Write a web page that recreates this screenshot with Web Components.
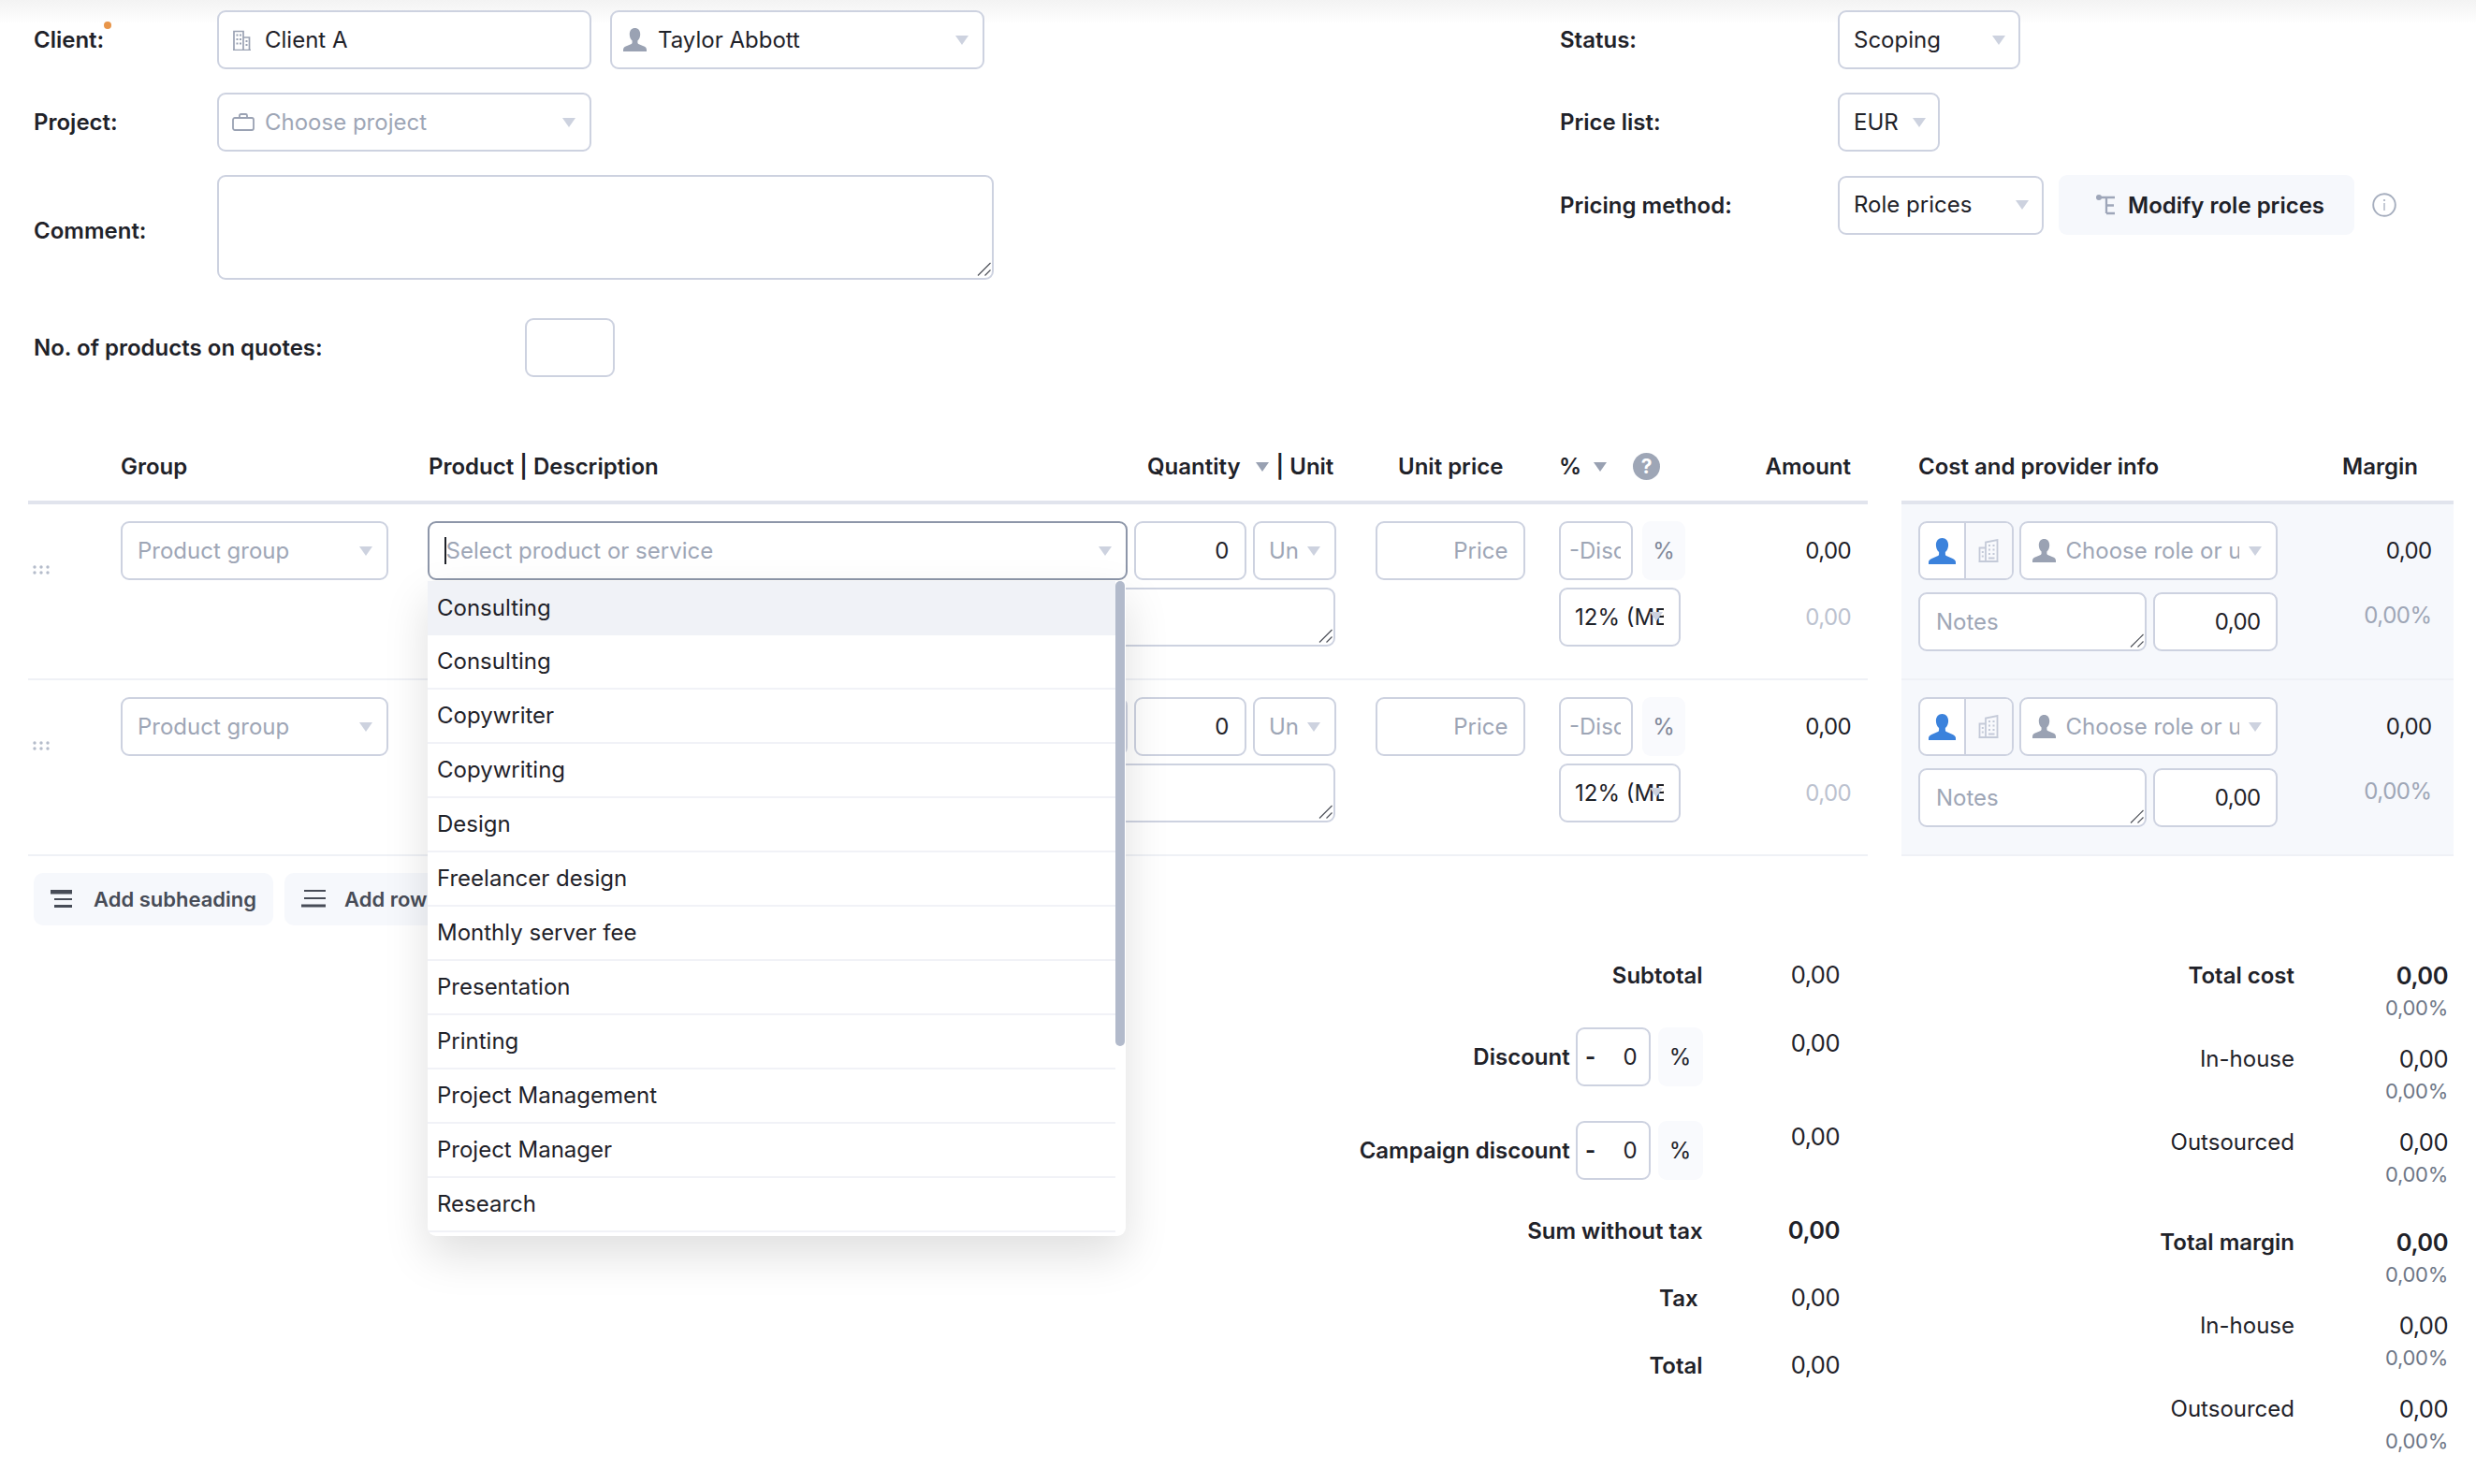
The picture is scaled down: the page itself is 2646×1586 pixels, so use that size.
<!DOCTYPE html>
<html lang="en">
<head>
<meta charset="utf-8">
<title>Quote</title>
<style>
html,body{margin:0;padding:0;background:#fff}
body{width:2646px;height:1586px;overflow:hidden;font-family:Inter,"Noto Sans",sans-serif;font-size:24px;color:#1f2229}
</style>
</head>
<body>
<x-app></x-app>
<script>
const ICONS = {
  person:[29,28,'<path fill="currentColor" d="M14.5 0c4 0 6.6 3 6.6 7.5 0 3.2-1.4 6-3.2 7.6v2.2c0 1 .6 1.6 1.6 2l6.3 2.6c1.8.8 3 2 3.2 3.7V28H0v-2.4c.2-1.7 1.4-2.9 3.2-3.7l6.3-2.6c1-.4 1.6-1 1.6-2v-2.2C9.3 13.5 7.9 10.7 7.9 7.5 7.9 3 10.5 0 14.5 0z"/>'],
  personS:[25,25,'<path fill="currentColor" d="M12.5 0c3.5 0 5.7 2.700 5.700 6.700 0 2.900-1.200 5.400-2.800 6.800v2c0 .9.500 1.400 1.400 1.800l5.400 2.300c1.600.7 2.600 1.800 2.800 3.300V25H0v-2.100c.2-1.500 1.200-2.600 2.800-3.300l5.400-2.300c.9-.4 1.400-.9 1.400-1.800v-2C8 12.100 6.800 9.600 6.800 6.700 6.800 2.700 9 0 12.500 0z"/>'],
  bldgR:[22,25,'<g fill="none" stroke="currentColor" stroke-width="1.800"><path d="M8 24V3.500L20.500 1v23M8 9.500H1.500V24M.5 24h21"/></g><g fill="currentColor"><rect x="11" y="6" width="2" height="2"/><rect x="15.500" y="6" width="2" height="2"/><rect x="11" y="10.500" width="2" height="2"/><rect x="15.500" y="10.500" width="2" height="2"/><rect x="11" y="15" width="2" height="2"/><rect x="15.500" y="15" width="2" height="2"/><rect x="11" y="19.500" width="6.500" height="2"/><rect x="3.800" y="13" width="2" height="2"/><rect x="3.800" y="17.500" width="2" height="2"/></g>'],
  bldgL:[19,22,'<g fill="none" stroke="currentColor" stroke-width="1.700"><path d="M1 21.500V1.500h10v20M11 8h6.500v13.500M0 21.500h19"/></g><g fill="currentColor"><rect x="3.500" y="4.500" width="2" height="2"/><rect x="7" y="4.500" width="2" height="2"/><rect x="3.500" y="9" width="2" height="2"/><rect x="7" y="9" width="2" height="2"/><rect x="3.500" y="13.500" width="2" height="2"/><rect x="7" y="13.500" width="2" height="2"/><rect x="13.500" y="11" width="2" height="2"/><rect x="13.500" y="15" width="2" height="2"/></g>'],
  bag:[24,19,'<g fill="none" stroke="currentColor" stroke-width="1.800"><rect x="1" y="5" width="22" height="13" rx="2"/><path d="M8 5V2.500A1.500 1.500 0 0 1 9.500 1h5A1.500 1.500 0 0 1 16 2.500V5"/></g>'],
  caret:[14,10,'<path fill="currentColor" d="M0 0h14L7 10z"/>'],
  tree:[21,24,'<circle cx="3" cy="4" r="3" fill="currentColor"/><path fill="none" stroke="currentColor" stroke-width="2.300" d="M3 4h17M11 4v17M11 12.500h8M11 21h9"/>'],
  info:[26,26,'<circle cx="13" cy="13" r="11.800" fill="none" stroke="currentColor" stroke-width="1.900"/><circle cx="13" cy="8" r="1.100" fill="currentColor"/><path stroke="currentColor" stroke-width="1.300" d="M13 11v8"/>'],
  drag:[18,10,'<g fill="currentColor"><circle cx="2" cy="2" r="1.700"/><circle cx="9" cy="2" r="1.700"/><circle cx="16" cy="2" r="1.700"/><circle cx="2" cy="8" r="1.700"/><circle cx="9" cy="8" r="1.700"/><circle cx="16" cy="8" r="1.700"/></g>'],
  sub:[23,20,'<g fill="currentColor"><rect x="0" y="0" width="23" height="4.500"/><rect x="4" y="9" width="19" height="2"/><rect x="4" y="16" width="19" height="3"/></g>'],
  row:[26,20,'<g fill="currentColor"><rect x="3" y="0" width="23" height="2"/><rect x="3" y="8" width="23" height="2"/><rect x="0" y="15.500" width="26" height="3"/></g>'],
  grip:[15,15,'<path fill="none" stroke="#4f525a" stroke-width="1.200" d="M1 14.500L14.500 1M8.500 14.500L14.500 8.500"/>']
};

function def(name, css, html, init){
  customElements.define(name, class extends HTMLElement{
    constructor(){
      super();
      const root = this.attachShadow({mode:'open'});
      root.innerHTML = '<style>'+css+'</style>'+(typeof html==='function'?html(this):html);
    }
    connectedCallback(){ if(init) init(this); }
  });
}

def('x-icon', ':host{display:inline-flex;flex:none;line-height:0}svg{display:block}', '', el=>{
  const ic = ICONS[el.getAttribute('name')];
  const w = el.getAttribute('w')||ic[0], h = el.getAttribute('h')||ic[1];
  el.shadowRoot.innerHTML = el.shadowRoot.querySelector('style').outerHTML +
    `<svg xmlns="http://www.w3.org/2000/svg" width="${w}" height="${h}" viewBox="0 0 ${ic[0]} ${ic[1]}">${ic[2]}</svg>`;
});

def('x-box', `
:host{display:flex;align-items:center;box-sizing:border-box;height:63px;border:2px solid #cdd2e0;border-radius:9px;background:#fff;padding:0 15px;position:relative;color:#1f2229;min-width:0}
:host([ph]){color:#9ea6b6}
:host([focus]){border-color:#8d96a9}
.t{flex:1;min-width:0;overflow:hidden;white-space:nowrap;padding-bottom:1px}
:host([right]) .t{text-align:right}
.c{display:none;flex:none;color:#cdd2df;margin-left:var(--cl,6px)}
:host([caret]) .c{display:inline-flex}
.g{display:none;position:absolute;right:1px;bottom:2px}
:host([grip]) .g{display:inline-flex}
::slotted([slot=icon]){margin-right:var(--ig,12px)}
`, `<slot name="icon"></slot><span class="t"><slot></slot></span><x-icon class="c" name="caret"></x-icon><x-icon class="g" name="grip"></x-icon>`);

def('x-field', `
:host{display:flex;align-items:center;min-height:63px;font-weight:600}
.l{flex:none;width:var(--lw,196px);position:relative}
.ctl{display:flex;align-items:center;gap:var(--g,20px)}
`, `<div class="l"><slot name="label"></slot></div><div class="ctl"><slot></slot></div>`);

def('x-form-top', `
:host{display:grid;grid-template-columns:1631px 1fr;padding:11px 0 0 36px;height:394px;box-sizing:content-box}
.col{display:flex;flex-direction:column;gap:25px}
x-box{font-weight:400}
x-box x-icon{color:#9aa2b3}
.dot{position:absolute;left:75px;top:-5px;width:8px;height:8px;border-radius:50%;background:#e8954a}
.lab{position:relative;display:inline-block}
.info{color:#a6aebe;margin-left:2.500px}
.mod{display:flex;align-items:center;height:64px;box-sizing:border-box;padding:0 32px 0 40px;background:#f6f8fc;border-radius:9px;color:#1f2229;font-weight:600;gap:13px}
.mod x-icon{color:#9ea6b9}
`, `
<div class="col">
  <x-field><span class="lab" slot="label">Client:<span class="dot"></span></span>
    <x-box style="width:400px;--ig:15px"><x-icon slot="icon" name="bldgL"></x-icon>Client A</x-box>
    <x-box caret style="width:400px;padding:0 15px 0 12px;--ig:12px"><x-icon slot="icon" name="personS"></x-icon>Taylor Abbott</x-box>
  </x-field>
  <x-field><span slot="label">Project:</span>
    <x-box ph caret style="width:400px;padding:0 15px 0 14px;--ig:11px"><x-icon slot="icon" name="bag"></x-icon>Choose project</x-box>
  </x-field>
  <x-field><span slot="label" style="display:block;padding-top:7px">Comment:</span>
    <x-box grip style="width:830px;height:112px"></x-box>
  </x-field>
  <x-field style="--lw:525px;margin-top:16px"><span slot="label">No. of products on quotes:</span>
    <x-box style="width:96px"></x-box>
  </x-field>
</div>
<div class="col">
  <x-field style="--lw:297px"><span slot="label">Status:</span>
    <x-box caret style="width:195px;padding:0 14px 0 15px">Scoping</x-box>
  </x-field>
  <x-field style="--lw:297px"><span slot="label">Price list:</span>
    <x-box caret style="width:109px;padding:0 13px 0 15px">EUR</x-box>
  </x-field>
  <x-field style="--lw:297px;--g:16px"><span slot="label">Pricing method:</span>
    <x-box caret style="width:220px;padding:0 14px 0 15px">Role prices</x-box>
    <div class="mod"><x-icon name="tree"></x-icon>Modify role prices</div>
    <x-icon class="info" name="info"></x-icon>
  </x-field>
</div>`);

def('x-grid-head', `
:host{display:grid;grid-template-columns:var(--cols);align-items:center;height:79px;box-sizing:border-box;padding-top:1px;border-bottom:4px solid #e1e4ed;font-weight:600}
.r{text-align:right;padding-right:18px}
.q{padding-left:13px;display:flex;align-items:center}
.q x-icon{color:#99a1b2;margin:2px 8px 0 16px}
.p{display:flex;align-items:center;margin-left:-1px}
.p x-icon{color:#99a1b2;margin:2px 0 0 13px}
.help{width:29px;height:29px;border-radius:50%;background:#9ea6b6;color:#fff;display:flex;align-items:center;justify-content:center;font-size:21px;font-weight:700;margin-left:28px}
`, `
<div></div><div style="margin-left:-1px">Group</div><div>Product | Description</div>
<div class="q">Quantity<x-icon name="caret"></x-icon>| Unit</div>
<div style="padding-left:23px">Unit price</div>
<div class="p">%<x-icon name="caret"></x-icon><span class="help">?</span></div>
<div class="r">Amount</div>`);

def('x-quote-row', `
:host{display:grid;grid-template-columns:var(--cols);grid-template-rows:63px 63px;row-gap:8px;align-content:start;height:188px;box-sizing:border-box;padding-top:18px;border-bottom:2px solid #eff1f6}
.drag{color:#b5bccb;padding:47px 0 0 5px;grid-row:1 / 3}
.drag x-icon{display:block;width:18px}
.gr{grid-column:2;width:285.5px;margin-left:-1px;padding-left:16px}
.prod{grid-column:3;margin-left:-1px;width:748px}
.pair{grid-column:4;display:flex;gap:8px;margin-left:-1px}
.disc{grid-column:6;display:flex;gap:10px;margin-left:-1px}
.pct{width:46px;height:63px;background:#f9fafd;border-radius:9px;display:flex;align-items:center;justify-content:center;color:#7f8798}
.amt{grid-column:7;padding-right:18px;text-align:right;align-self:center;letter-spacing:-.6px}
.desc{grid-column:3 / 5;grid-row:2;width:970px;margin-left:-1px}
.vat{grid-column:6;grid-row:2;width:130px;margin-left:-1px}
.ovc{position:absolute;left:95px;top:24px;color:#cdd2df}
.cur{display:inline-block;width:2px;height:29px;background:#1f2229;vertical-align:-6px;margin:0 -.5px 0 0}
`, el=>`
<div class="drag"><x-icon name="drag"></x-icon></div>
<x-box class="gr" ph caret>Product group</x-box>
<x-box class="prod" ph caret ${el.hasAttribute('first')?'focus':''} style="padding:0 15px 0 16px">${el.hasAttribute('first')?'<span class="cur"></span>Select product or service':''}</x-box>
<div class="pair">
  <x-box right style="width:119.500px;padding-right:16px">0</x-box>
  <x-box ph caret style="width:89.500px;padding:0 15px 0 15.500px;--cl:0;margin-left:-1px">Un</x-box>
</div>
<x-box right ph style="grid-column:5;width:159.500px;margin-left:-1px;padding-right:16px">Price</x-box>
<div class="disc"><x-box ph style="width:79px;padding:0 11px 0 9px">-Disc</x-box><div class="pct">%</div></div>
<div class="amt">0,00</div>
<x-box class="desc" grip></x-box>
<x-box class="vat" style="padding:0 16px 0 15px">12% (MB<x-icon class="ovc" name="caret"></x-icon></x-box>
<div class="amt" style="grid-row:2;color:#bcc2cf">0,00</div>`);

def('x-add-bar', `
:host{display:flex;gap:12px;padding:18px 0 0 6px}
.b{display:flex;align-items:center;height:56px;box-sizing:border-box;background:#f6f8fc;border-radius:10px;font-size:22px;font-weight:600;color:#474c57}
`, `
<div class="b" style="width:256px;padding-left:18px;gap:23px"><x-icon name="sub"></x-icon>Add subheading</div>
<div class="b" style="width:180px;padding-left:18px;gap:20px"><x-icon name="row"></x-icon>Add row</div>`);

def('x-sum-row', `
:host{display:grid;grid-template-columns:1fr 146.400px;padding-right:30px;min-height:40px;align-items:center;font-size:24px}
.l{display:flex;justify-content:flex-end;align-items:center;font-weight:600}
.v{text-align:right;font-size:25.500px;letter-spacing:-.5px;margin-bottom:1px}
:host([strong]) .v{font-weight:600}
:host([top]) .v{align-self:start;line-height:33px}
`, `<div class="l"><slot></slot></div><div class="v"><slot name="v"></slot></div>`);

def('x-totals', `
:host{display:flex;flex-direction:column;padding-top:33px}
.i{width:79.500px;padding:0 12px 0 8px;justify-content:space-between;margin:0 8px 0 6.500px;font-weight:600}
.ii{display:flex;width:100%;justify-content:space-between;font-weight:400}
.ii b{font-weight:700}
.pc{width:48px;height:63px;background:#f9fafd;border-radius:9px;display:flex;align-items:center;justify-content:center;font-weight:400}
`, `
<x-sum-row>Subtotal<span slot="v">0,00</span></x-sum-row>
<x-sum-row top style="margin-top:36px">Discount<x-box class="i"><span class="ii"><b>-</b><span>0</span></span></x-box><div class="pc">%</div><span slot="v">0,00</span></x-sum-row>
<x-sum-row top style="margin-top:37px">Campaign discount<x-box class="i"><span class="ii"><b>-</b><span>0</span></span></x-box><div class="pc">%</div><span slot="v">0,00</span></x-sum-row>
<x-sum-row strong style="margin-top:34px">Sum without tax<span slot="v">0,00</span></x-sum-row>
<x-sum-row style="margin-top:32px"><span style="padding-right:5px">Tax</span><span slot="v">0,00</span></x-sum-row>
<x-sum-row style="margin-top:32px">Total<span slot="v">0,00</span></x-sum-row>`);

def('x-cost-head', `
:host{display:grid;grid-template-columns:1fr auto;align-items:center;height:79px;box-sizing:border-box;padding:1px 38px 0 18px;border-bottom:4px solid #e1e4ed;font-weight:600}
`, `<div>Cost and provider info</div><div>Margin</div>`);

def('x-cost-row', `
:host{display:grid;grid-template-columns:383.500px 1fr;grid-template-rows:63px 63px;row-gap:13px;align-content:start;height:188px;box-sizing:border-box;padding:18px 23.500px 0 18px;border-bottom:2px solid #eff1f6;background:#f6f8fc}
.top{display:flex;gap:6px}
.bot{display:flex;gap:7px}
.tg{width:101.600px;height:63px;box-sizing:border-box;border:2px solid #cdd2e0;border-radius:9px;display:flex;overflow:hidden;background:#fff}
.tg div{display:flex;align-items:center;justify-content:center}
.a{width:47px;border-right:2px solid #cdd2e0;color:#3b82dc}
.b{flex:1;background:#f8f9fc;color:#c4cad8}
.m{text-align:right;align-self:center;letter-spacing:-.6px}
.n{text-align:right;color:#9ea6b6;align-self:start;margin-top:10px;letter-spacing:-.5px}
`, `
<div class="top">
  <div class="tg"><div class="a"><x-icon name="person"></x-icon></div><div class="b"><x-icon name="bldgR"></x-icon></div></div>
  <x-box ph caret style="width:276px;padding:0 15px 0 12px;--ig:11px;--cl:10px"><x-icon slot="icon" name="personS" style="color:#9aa2b3"></x-icon>Choose role or u</x-box>
</div>
<div class="m">0,00</div>
<div class="bot">
  <x-box ph grip style="width:244px;padding-left:17px">Notes</x-box>
  <x-box right style="width:133px;padding-right:16px;letter-spacing:-.6px">0,00</x-box>
</div>
<div class="n">0,00%</div>`);

def('x-cost-group', `
:host{display:grid;grid-template-columns:1fr 164px;grid-auto-rows:35px;align-items:center;padding-right:6px;margin-bottom:19px}
.l{text-align:right}
.v{text-align:right;font-size:25.500px;letter-spacing:-.5px}
.s{grid-column:2;text-align:right;font-size:22px;letter-spacing:-.3px;color:#6f7787}
:host([strong]) .l{font-weight:600}
:host([strong]) .v{font-weight:600}
`, el=>`<div class="l">${el.getAttribute('label')}</div><div class="v">0,00</div><div class="s">0,00%</div>`);

def('x-cost-totals', `
:host{display:block;padding-top:109.500px}
`, `
<x-cost-group strong label="Total cost"></x-cost-group>
<x-cost-group label="In-house"></x-cost-group>
<x-cost-group label="Outsourced"></x-cost-group>
<x-cost-group strong label="Total margin" style="margin-top:37px"></x-cost-group>
<x-cost-group label="In-house"></x-cost-group>
<x-cost-group label="Outsourced"></x-cost-group>`);

def('x-product-menu', `
:host{display:block;position:absolute;left:457px;top:621px;width:746px;height:700px;background:#fff;border-radius:0 0 9px 9px;box-shadow:0 20px 48px rgba(0,0,0,.13);overflow:hidden;z-index:5}
.list{width:735px}
.it{display:flex;align-items:center;height:58px;box-sizing:border-box;padding-left:10px;padding-bottom:1px;border-bottom:2px solid #f1f2f7}
.it:first-child{background:#f0f2f7;border-bottom:0}
.bar{position:absolute;right:1px;top:0;width:10px;height:497px;background:#b2bacb;border-radius:5px}
`, el=>`<div class="list">${['Consulting','Consulting','Copywriter','Copywriting','Design','Freelancer design','Monthly server fee','Presentation','Printing','Project Management','Project Manager','Research'].map(t=>`<div class="it">${t}</div>`).join('')}</div><div class="bar"></div>`);

def('x-app', `
:host{display:block;position:relative;width:2646px;height:1586px;background:linear-gradient(#f3f3f3,#fff 26px) no-repeat;--cols:100px 328px 755px 258px 196px 134px 195px}
.wrap{display:flex;gap:36px;margin-top:55px;padding-left:30px}
.main{width:1966px;flex:none}
.cost{width:590px;flex:none}
`, `
<x-form-top></x-form-top>
<div class="wrap">
  <div class="main">
    <x-grid-head></x-grid-head>
    <x-quote-row first></x-quote-row>
    <x-quote-row></x-quote-row>
    <x-add-bar></x-add-bar>
    <x-totals></x-totals>
  </div>
  <div class="cost">
    <x-cost-head></x-cost-head>
    <x-cost-row></x-cost-row>
    <x-cost-row></x-cost-row>
    <x-cost-totals></x-cost-totals>
  </div>
</div>
<x-product-menu></x-product-menu>`);
</script>
</body>
</html>
